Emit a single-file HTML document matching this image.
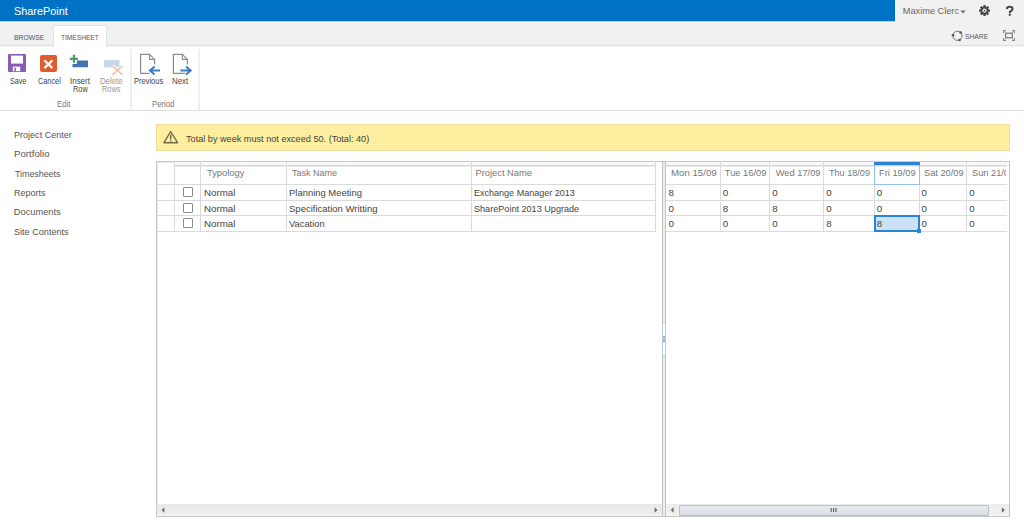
<!DOCTYPE html>
<html><head><meta charset="utf-8">
<style>
*{box-sizing:border-box;margin:0;padding:0}
html,body{width:1024px;height:520px;overflow:hidden;background:#fff;font-family:"Liberation Sans",sans-serif;position:relative}
.a{position:absolute;white-space:nowrap;line-height:1}
svg{position:absolute;overflow:visible}
.tabs{font-size:6.6px;color:#555}
.rl{font-size:7.2px;color:#555}
.nav{font-size:9px;color:#555}
.th{font-size:9.2px;color:#777}
.td{font-size:9.2px;color:#444}
.l{position:absolute;background:#dadada}
.cb{position:absolute;width:10px;height:10px;border:1.3px solid #8c8c8c;border-radius:1px;background:#fff}
</style></head><body>
<!-- suite bar -->
<div class="a" style="left:0;top:0;width:1024px;height:46px;background:#f1f1f1"></div>
<div class="a" style="left:0;top:0;width:895px;height:21px;background:#0072c6"></div>
<div class="a" style="left:0;top:21px;width:896px;height:1px;background:#b5d2ec"></div>
<div class="a" style="left:0;top:22px;width:896px;height:1px;background:#fbf9f6"></div>
<svg style="left:960px;top:10px" width="6" height="4"><path d="M0.5 0.5 L5.5 0.5 L3 3.5 Z" fill="#666"/></svg>
<svg style="left:978px;top:5px" width="13" height="12" viewBox="0 0 13 12">
 <g transform="translate(6.5,5.6)" fill="#474747">
  <circle r="4.2"/>
  <rect x="-1.15" y="-5.5" width="2.3" height="2.5" rx="0.4" transform="rotate(0)"/>
  <rect x="-1.15" y="-5.5" width="2.3" height="2.5" rx="0.4" transform="rotate(45)"/>
  <rect x="-1.15" y="-5.5" width="2.3" height="2.5" rx="0.4" transform="rotate(90)"/>
  <rect x="-1.15" y="-5.5" width="2.3" height="2.5" rx="0.4" transform="rotate(135)"/>
  <rect x="-1.15" y="-5.5" width="2.3" height="2.5" rx="0.4" transform="rotate(180)"/>
  <rect x="-1.15" y="-5.5" width="2.3" height="2.5" rx="0.4" transform="rotate(225)"/>
  <rect x="-1.15" y="-5.5" width="2.3" height="2.5" rx="0.4" transform="rotate(270)"/>
  <rect x="-1.15" y="-5.5" width="2.3" height="2.5" rx="0.4" transform="rotate(315)"/>
  <circle r="2.1" fill="#f1f1f1"/><circle r="0.9" fill="#474747"/>
 </g>
</svg>
<svg style="left:1005px;top:5px" width="10" height="12" viewBox="0 0 10 12">
 <path d="M1.9,4 C1.9,2.5 3.2,1.8 4.8,1.8 C6.5,1.8 7.5,2.7 7.5,3.9 C7.5,5.1 6.6,5.6 5.8,6.1 C5.1,6.5 4.8,6.9 4.8,8" fill="none" stroke="#474747" stroke-width="2"/>
 <rect x="3.75" y="8.7" width="2.1" height="2" fill="#474747"/>
</svg>
<!-- tabs -->
<div class="a" style="left:0;top:45px;width:1024px;height:1px;background:#e0e0e0"></div>
<div class="a" style="left:0;top:46px;width:1024px;height:1px;background:#f6f6f6"></div>
<div class="a" style="left:53px;top:25px;width:54px;height:22px;background:#fff;border:1px solid #e2e2e2;border-bottom:none"></div>
<svg style="left:950.5px;top:30px" width="13" height="12" viewBox="0 0 13 12">
 <circle cx="6.5" cy="5.8" r="4.6" fill="none" stroke="#777" stroke-width="1"/>
 <circle cx="2" cy="5.3" r="1.3" fill="#555"/><circle cx="9.6" cy="2.5" r="1.3" fill="#555"/><circle cx="8.6" cy="10" r="1.3" fill="#555"/>
</svg>
<svg style="left:1003px;top:30px" width="12" height="11" viewBox="0 0 12 11">
 <path d="M0.6,3 V0.6 H3 M9,0.6 H11.4 V3 M11.4,8 V10.4 H9 M3,10.4 H0.6 V8" fill="none" stroke="#888" stroke-width="1.2"/>
 <rect x="2.6" y="3.2" width="6.8" height="4.6" fill="none" stroke="#777" stroke-width="1.2"/>
</svg>
<!-- ribbon -->
<div class="a" style="left:0;top:110px;width:1024px;height:1px;background:#e1e1e1"></div>
<div class="a" style="left:130px;top:49px;width:2px;height:61px;background:#efefef"></div>
<div class="a" style="left:198px;top:49px;width:2px;height:61px;background:#efefef"></div>
<!-- save icon -->
<svg style="left:8px;top:54px" width="18" height="18" viewBox="0 0 18 18">
 <rect x="0" y="0" width="18" height="18" rx="1" fill="#8a5cb8"/>
 <rect x="3" y="1.6" width="12" height="8" fill="#fff"/>
 <rect x="4.8" y="12.6" width="7.4" height="4.6" fill="#fff"/>
 <rect x="6.4" y="13.6" width="1.5" height="3.6" fill="#8a5cb8"/>
</svg>
<!-- cancel icon -->
<svg style="left:40.3px;top:55.3px" width="17" height="17" viewBox="0 0 17 17">
 <rect x="0" y="0" width="17" height="17" rx="2" fill="#e15b2e"/>
 <path d="M4.4,5.3 L12.4,13.1 M12.4,5.3 L4.4,13.1" stroke="#fff" stroke-width="2.3"/>
</svg>
<!-- insert row icon -->
<svg style="left:66px;top:51px" width="26" height="20" viewBox="0 0 26 20">
 <path d="M10.8,9.4 H22 V16.3 H6.5 V13 H10.8 Z" fill="#4473b0"/>
 <path d="M3.8,7.9 H11.9 M7.9,3.7 V11.7" stroke="#4c9a6c" stroke-width="2.2"/>
</svg>
<!-- delete rows icon -->
<svg style="left:100px;top:55px" width="26" height="22" viewBox="0 0 26 22">
 <rect x="4" y="5" width="15.5" height="7.5" fill="#c8d8ea"/>
 <path d="M12.5,10.8 L22.5,19.8 M22.5,10.8 L12.5,19.8" stroke="#fff" stroke-width="3.2"/>
 <path d="M12.5,10.8 L22.5,19.8 M22.5,10.8 L12.5,19.8" stroke="#f2c2b2" stroke-width="1.6"/>
</svg>
<!-- previous icon -->
<svg style="left:136px;top:50px" width="28" height="28" viewBox="0 0 28 28">
 <path d="M13.5,23.4 H4.6 V4.3 H13.5 L18.6,9.4 V14.5" fill="none" stroke="#8c8c8c" stroke-width="1.2"/>
 <path d="M13.5,4.3 V9.4 H18.6" fill="none" stroke="#8c8c8c" stroke-width="1.1"/>
 <path d="M13.5,20.5 H24 M18.6,16.4 L13.9,20.5 L18.6,24.6" fill="none" stroke="#3c7dc4" stroke-width="2"/>
</svg>
<!-- next icon -->
<svg style="left:168px;top:50px" width="28" height="28" viewBox="0 0 28 28">
 <path d="M17,23.4 H5.4 V4.3 H14.3 L19.4,9.4 V14.5" fill="none" stroke="#8c8c8c" stroke-width="1.2"/>
 <path d="M14.3,4.3 V9.4 H19.4" fill="none" stroke="#8c8c8c" stroke-width="1.1"/>
 <path d="M12.4,20.5 H23.4 M18,16.4 L22.7,20.5 L18,24.6" fill="none" stroke="#3c7dc4" stroke-width="2"/>
</svg>
<!-- nav -->
<!-- warning -->
<div class="a" style="left:156px;top:124px;width:854px;height:27px;background:#fdef9f;border:1px solid #e8e09c"></div>
<svg style="left:163px;top:130px" width="16" height="14" viewBox="0 0 16 14">
 <path d="M7.7,1.5 L14.6,12.7 H1.0 Z" fill="none" stroke="#716b4c" stroke-width="1.4" stroke-linejoin="round"/>
 <path d="M7.7,4.6 V9.4" stroke="#716b4c" stroke-width="1.5"/>
 <rect x="6.95" y="10.2" width="1.5" height="1.4" fill="#716b4c"/>
</svg>

<!-- grid -->
<div class="a" style="left:156px;top:161px;width:854px;height:1px;background:#c6c6c6"></div>
<div class="a" style="left:156px;top:516px;width:854px;height:1px;background:#c6c6c6"></div>
<div class="a" style="left:156px;top:161px;width:1px;height:356px;background:#c6c6c6"></div>
<div class="a" style="left:1009px;top:161px;width:1px;height:356px;background:#c6c6c6"></div>
<div class="a" style="left:662px;top:161px;width:1px;height:356px;background:#c6c6c6"></div>
<div class="a" style="left:663px;top:162px;width:2px;height:354px;background:#ececec"></div>
<div class="a" style="left:157px;top:162px;width:1px;height:342px;background:#ececec"></div>
<div class="a" style="left:157px;top:162px;width:17px;height:1px;background:#ececec"></div>
<div class="a" style="left:665px;top:161px;width:1px;height:356px;background:#c6c6c6"></div>
<!-- left table lines -->
<div class="l" style="left:174px;top:162px;width:482px;height:3px;background:#f9f9f9"></div>
<div class="l" style="left:174px;top:165px;width:482px;height:1px;background:#d2d2d2"></div>
<div class="l" style="left:174px;top:166px;width:482px;height:1px;background:#ededed"></div>
<div class="l" style="left:156px;top:184px;width:500px;height:1px"></div>
<div class="l" style="left:156px;top:200px;width:500px;height:1px"></div>
<div class="l" style="left:156px;top:215px;width:500px;height:1px"></div>
<div class="l" style="left:156px;top:231px;width:500px;height:1px"></div>
<div class="l" style="left:174px;top:161px;width:1px;height:71px"></div>
<div class="l" style="left:200px;top:161px;width:1px;height:71px"></div>
<div class="l" style="left:286px;top:161px;width:1px;height:71px"></div>
<div class="l" style="left:471px;top:161px;width:1px;height:71px"></div>
<div class="l" style="left:655px;top:161px;width:1px;height:71px"></div>
<!-- right table lines -->
<div class="l" style="left:666px;top:162px;width:341px;height:3px;background:#f9f9f9"></div>
<div class="l" style="left:666px;top:165px;width:341px;height:1px;background:#d2d2d2"></div>
<div class="l" style="left:666px;top:166px;width:341px;height:1px;background:#ededed"></div>
<div class="l" style="left:666px;top:184px;width:341px;height:1px"></div>
<div class="l" style="left:666px;top:200px;width:341px;height:1px"></div>
<div class="l" style="left:666px;top:215px;width:341px;height:1px"></div>
<div class="l" style="left:666px;top:231px;width:341px;height:1px"></div>
<div class="l" style="left:720px;top:161px;width:1px;height:71px"></div>
<div class="l" style="left:769px;top:161px;width:1px;height:71px"></div>
<div class="l" style="left:823px;top:161px;width:1px;height:71px"></div>
<div class="l" style="left:874px;top:161px;width:1px;height:71px"></div>
<div class="l" style="left:919px;top:161px;width:1px;height:71px"></div>
<div class="l" style="left:966px;top:161px;width:1px;height:71px"></div>
<!-- selected column header -->
<div class="a" style="left:874px;top:162px;width:46px;height:23px;border:1px solid #8fc0ea;border-top:none"></div>
<div class="a" style="left:874px;top:162px;width:46px;height:2.5px;background:#2a84d2"></div>
<!-- selected cell -->
<div class="a" style="left:874px;top:215px;width:46px;height:17px;background:#cce2f5;border:2px solid #2a84d2"></div>
<div class="a" style="left:917px;top:229px;width:4px;height:4px;background:#2a84d2"></div>
<!-- checkboxes -->
<div class="cb" style="left:183px;top:187px"></div>
<div class="cb" style="left:183px;top:203px"></div>
<div class="cb" style="left:183px;top:218px"></div>
<!-- left header text -->
<!-- left body -->
<!-- right header text -->
<!-- right body -->
<!-- splitter handle -->
<div class="a" style="left:662px;top:323px;width:4px;height:33px;background:#fff;border:1px solid #b0cfee"></div>
<svg style="left:662px;top:336px" width="4" height="7"><path d="M1,1 H3 M1,3.2 H3 M1,5.4 H3" stroke="#666" stroke-width="1"/></svg>
<!-- scrollbars -->
<div class="a" style="left:157px;top:504px;width:505px;height:12px;background:linear-gradient(#e9e9e9,#eeeeee 80%,#f6f6f6)"></div>
<svg style="left:160px;top:506px" width="6" height="8"><path d="M4.4,1.3 V6.7 L1.5,4 Z" fill="#6a6a6a"/></svg>
<svg style="left:653px;top:506px" width="6" height="8"><path d="M1.6,1.3 V6.7 L4.5,4 Z" fill="#6a6a6a"/></svg>
<div class="a" style="left:666px;top:504px;width:343px;height:12px;background:linear-gradient(#ececec,#f0f0f0 80%,#f7f7f7)"></div>
<svg style="left:669px;top:506px" width="6" height="8"><path d="M4.6,1.3 V6.7 L1.7,4 Z" fill="#6a6a6a"/></svg>
<div class="a" style="left:679px;top:504.5px;width:310px;height:11px;background:linear-gradient(#e8eaee,#dadee4);border:1px solid #bcbfc4;border-radius:1px"></div>
<svg style="left:830px;top:507px" width="8" height="6"><path d="M1.2,1 V5 M3.6,1 V5 M6,1 V5" stroke="#5a5a5a" stroke-width="1.1"/></svg>
<svg style="left:1000px;top:506px" width="6" height="8"><path d="M1.9,1.3 V6.7 L4.8,4 Z" fill="#6a6a6a"/></svg>
<div class="a" style="left:13.86px;top:6.00px;font-size:11.40px;color:#fff;transform:scaleX(0.953);transform-origin:0 0;">SharePoint</div>
<div class="a" style="left:902.87px;top:7.00px;font-size:9.20px;color:#666;">Maxime Clerc</div>
<div class="a" style="left:13.65px;top:34.00px;font-size:8.00px;color:#555;transform:scaleX(0.856);transform-origin:0 0;">BROWSE</div>
<div class="a" style="left:60.57px;top:34.00px;font-size:8.00px;color:#555;transform:scaleX(0.825);transform-origin:0 0;">TIMESHEET</div>
<div class="a" style="left:965.16px;top:33.00px;font-size:8.00px;color:#555;transform:scaleX(0.840);transform-origin:0 0;">SHARE</div>
<div class="a" style="left:9.64px;top:78.00px;font-size:8.20px;color:#444;transform:scaleX(0.873);transform-origin:0 0;">Save</div>
<div class="a" style="left:37.63px;top:78.00px;font-size:8.20px;color:#444;transform:scaleX(0.894);transform-origin:0 0;">Cancel</div>
<div class="a" style="left:70.08px;top:78.00px;font-size:8.20px;color:#444;transform:scaleX(0.971);transform-origin:0 0;">Insert</div>
<div class="a" style="left:72.91px;top:86.00px;font-size:8.20px;color:#444;transform:scaleX(0.896);transform-origin:0 0;">Row</div>
<div class="a" style="left:100.38px;top:78.00px;font-size:8.20px;color:#999;transform:scaleX(0.951);transform-origin:0 0;">Delete</div>
<div class="a" style="left:102.41px;top:86.00px;font-size:8.20px;color:#999;transform:scaleX(0.902);transform-origin:0 0;">Rows</div>
<div class="a" style="left:133.80px;top:78.00px;font-size:8.20px;color:#444;transform:scaleX(0.915);transform-origin:0 0;">Previous</div>
<div class="a" style="left:172.17px;top:78.00px;font-size:8.20px;color:#444;transform:scaleX(0.960);transform-origin:0 0;">Next</div>
<div class="a" style="left:56.78px;top:100.00px;font-size:8.40px;color:#777;transform:scaleX(0.929);transform-origin:0 0;">Edit</div>
<div class="a" style="left:151.98px;top:100.00px;font-size:8.40px;color:#777;transform:scaleX(0.926);transform-origin:0 0;">Period</div>
<div class="a" style="left:13.88px;top:131.00px;font-size:9.30px;color:#555;transform:scaleX(0.973);transform-origin:0 0;">Project Center</div>
<div class="a" style="left:14.02px;top:150.00px;font-size:9.30px;color:#555;transform:scaleX(1.042);transform-origin:0 0;">Portfolio</div>
<div class="a" style="left:14.62px;top:170.00px;font-size:9.30px;color:#555;transform:scaleX(0.950);transform-origin:0 0;">Timesheets</div>
<div class="a" style="left:14.08px;top:189.00px;font-size:9.30px;color:#555;transform:scaleX(0.971);transform-origin:0 0;">Reports</div>
<div class="a" style="left:13.75px;top:208.00px;font-size:9.30px;color:#555;">Documents</div>
<div class="a" style="left:14.04px;top:228.00px;font-size:9.30px;color:#555;transform:scaleX(0.979);transform-origin:0 0;">Site Contents</div>
<div class="a" style="left:185.82px;top:134.00px;font-size:9.40px;color:#444;transform:scaleX(0.974);transform-origin:0 0;">Total by week must not exceed 50. (Total: 40)</div>
<div class="a" style="left:206.61px;top:169.00px;font-size:9.30px;color:#777;transform:scaleX(1.005);transform-origin:0 0;">Typology</div>
<div class="a" style="left:291.62px;top:169.00px;font-size:9.30px;color:#777;transform:scaleX(0.969);transform-origin:0 0;">Task Name</div>
<div class="a" style="left:475.56px;top:169.00px;font-size:9.30px;color:#777;">Project Name</div>
<div class="a" style="left:203.52px;top:188.00px;font-size:9.50px;color:#444;transform:scaleX(1.022);transform-origin:0 0;">Normal</div>
<div class="a" style="left:288.75px;top:188.00px;font-size:9.50px;color:#444;transform:scaleX(0.993);transform-origin:0 0;">Planning Meeting</div>
<div class="a" style="left:473.58px;top:188.00px;font-size:9.50px;color:#444;transform:scaleX(0.950);transform-origin:0 0;">Exchange Manager 2013</div>
<div class="a" style="left:203.52px;top:204.00px;font-size:9.50px;color:#444;transform:scaleX(1.022);transform-origin:0 0;">Normal</div>
<div class="a" style="left:289.03px;top:204.00px;font-size:9.50px;color:#444;">Specification Writting</div>
<div class="a" style="left:473.85px;top:204.00px;font-size:9.50px;color:#444;transform:scaleX(0.957);transform-origin:0 0;">SharePoint 2013 Upgrade</div>
<div class="a" style="left:203.52px;top:219.00px;font-size:9.50px;color:#444;transform:scaleX(1.022);transform-origin:0 0;">Normal</div>
<div class="a" style="left:289.41px;top:219.00px;font-size:9.50px;color:#444;transform:scaleX(0.982);transform-origin:0 0;">Vacation</div>
<div class="a" style="left:670.73px;top:169.00px;font-size:9.30px;color:#777;transform:scaleX(1.040);transform-origin:0 0;">Mon 15/09</div>
<div class="a" style="left:724.81px;top:169.00px;font-size:9.30px;color:#777;">Tue 16/09</div>
<div class="a" style="left:775.71px;top:169.00px;font-size:9.30px;color:#777;">Wed 17/09</div>
<div class="a" style="left:829.42px;top:169.00px;font-size:9.30px;color:#777;transform:scaleX(0.978);transform-origin:0 0;">Thu 18/09</div>
<div class="a" style="left:878.96px;top:169.00px;font-size:9.30px;color:#777;">Fri 19/09</div>
<div class="a" style="left:923.84px;top:169.00px;font-size:9.30px;color:#777;transform:scaleX(0.993);transform-origin:0 0;">Sat 20/09</div>
<div class="a" style="left:668.41px;top:188px;font-size:9.80px;color:#444">8</div>
<div class="a" style="left:722.71px;top:188px;font-size:9.80px;color:#444">0</div>
<div class="a" style="left:772.21px;top:188px;font-size:9.80px;color:#444">0</div>
<div class="a" style="left:826.31px;top:188px;font-size:9.80px;color:#444">0</div>
<div class="a" style="left:876.71px;top:188px;font-size:9.80px;color:#444">0</div>
<div class="a" style="left:921.51px;top:188px;font-size:9.80px;color:#444">0</div>
<div class="a" style="left:969.21px;top:188px;font-size:9.80px;color:#444">0</div>
<div class="a" style="left:668.41px;top:204px;font-size:9.80px;color:#444">0</div>
<div class="a" style="left:722.71px;top:204px;font-size:9.80px;color:#444">8</div>
<div class="a" style="left:772.21px;top:204px;font-size:9.80px;color:#444">8</div>
<div class="a" style="left:826.31px;top:204px;font-size:9.80px;color:#444">0</div>
<div class="a" style="left:876.71px;top:204px;font-size:9.80px;color:#444">0</div>
<div class="a" style="left:921.51px;top:204px;font-size:9.80px;color:#444">0</div>
<div class="a" style="left:969.21px;top:204px;font-size:9.80px;color:#444">0</div>
<div class="a" style="left:668.41px;top:219px;font-size:9.80px;color:#444">0</div>
<div class="a" style="left:722.71px;top:219px;font-size:9.80px;color:#444">0</div>
<div class="a" style="left:772.21px;top:219px;font-size:9.80px;color:#444">0</div>
<div class="a" style="left:826.31px;top:219px;font-size:9.80px;color:#444">8</div>
<div class="a" style="left:876.71px;top:219px;font-size:9.80px;color:#444">8</div>
<div class="a" style="left:921.51px;top:219px;font-size:9.80px;color:#444">0</div>
<div class="a" style="left:969.21px;top:219px;font-size:9.80px;color:#444">0</div>
<div class="a" style="left:967px;top:161px;width:39px;height:23px;overflow:hidden"><div class="a" style="left:4.54px;top:8px;font-size:9.30px;color:#777;transform:scaleX(0.993);transform-origin:0 0">Sun 21/09</div></div>
</body></html>
